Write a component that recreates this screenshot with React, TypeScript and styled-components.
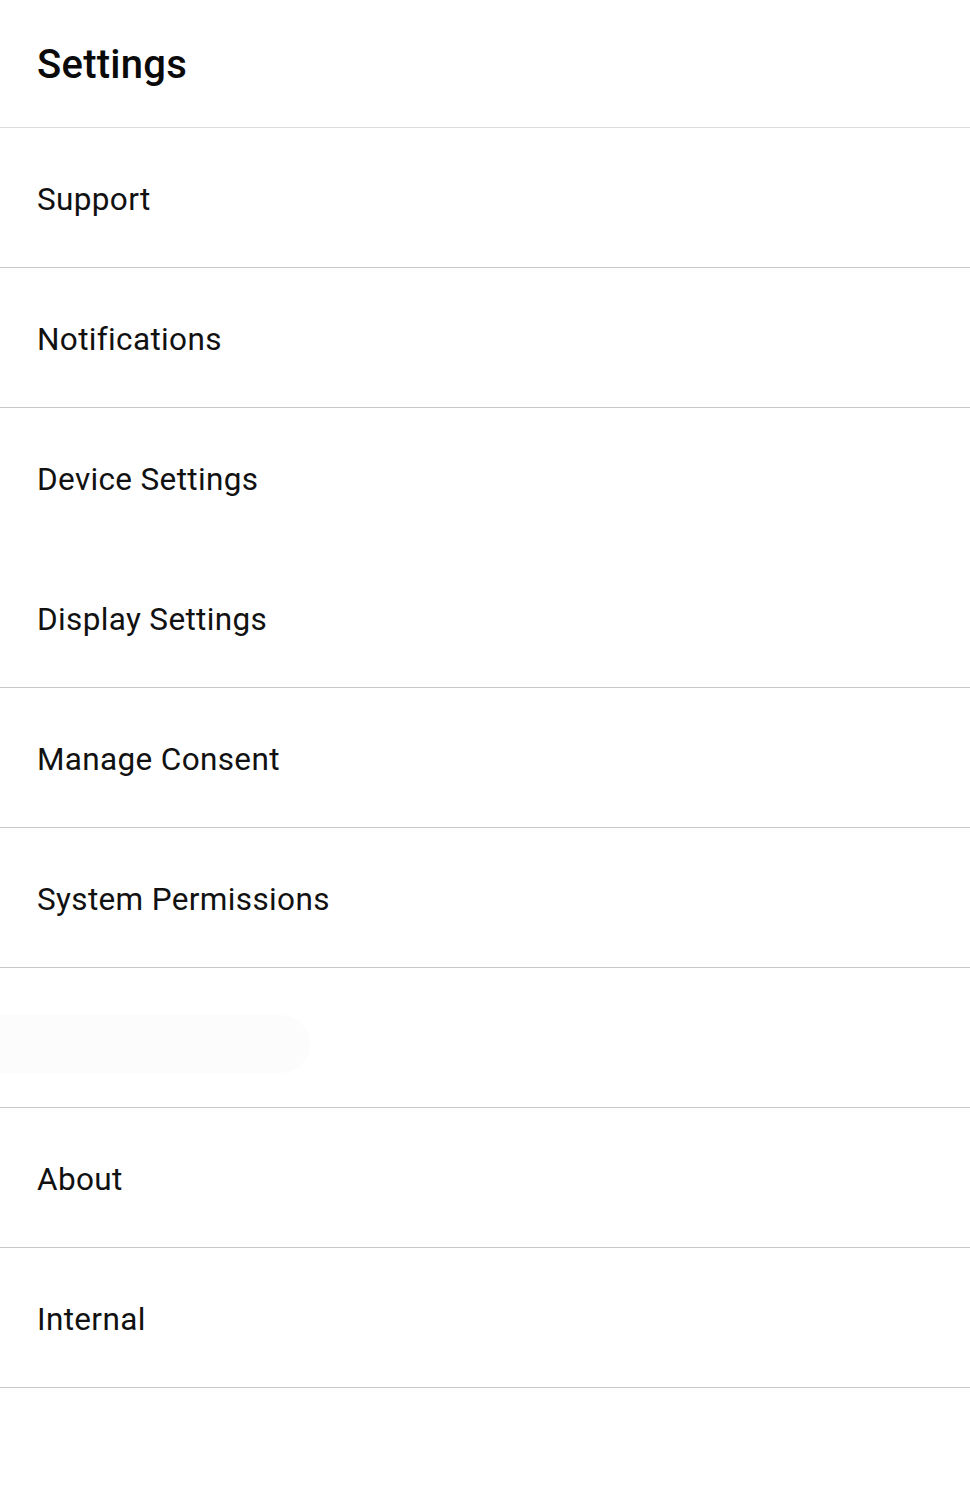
import styled, { createGlobalStyle } from 'styled-components'

const GlobalStyle = createGlobalStyle`
  html, body {
    margin: 0;
    padding: 0;
    background: #ffffff;
  }
  body {
    font-family: Roboto, "Noto Sans", "Liberation Sans", sans-serif;
    color: #000000;
  }
`

const Page = styled.div`
  width: 970px;
  min-height: 1487px;
  background: #ffffff;
`

const Header = styled.header`
  height: 128px;
  box-sizing: border-box;
  display: flex;
  align-items: center;
  padding: 2px 37px 0;
  border-bottom: 1px solid #dcdcdc;
`

const Title = styled.h1`
  margin: 0;
  font-size: 40px;
  font-weight: 500;
  letter-spacing: 0.25px;
  color: #0a0a0a;
`

const List = styled.ul`
  list-style: none;
  margin: 0;
  padding: 0;
`

const Row = styled.li<{ $divider?: boolean }>`
  height: 140px;
  box-sizing: border-box;
  display: flex;
  align-items: center;
  padding: 4px 37px 0;
  border-bottom: 1px solid ${p => (p.$divider ? '#c8c8c8' : 'transparent')};
  font-size: 31.5px;
  font-weight: 400;
  letter-spacing: 0.35px;
  color: #111111;
`

const GhostRow = styled.li`
  height: 140px;
  box-sizing: border-box;
  display: flex;
  align-items: center;
  border-bottom: 1px solid #c8c8c8;
`

const Ghost = styled.div`
  width: 310px;
  height: 58px;
  margin-top: 12px;
  border-radius: 4px 40px 40px 4px;
  background: #fcfcfc;
`

const items = [
  { label: 'Support', divider: true },
  { label: 'Notifications', divider: true },
  { label: 'Device Settings', divider: false },
  { label: 'Display Settings', divider: true },
  { label: 'Manage Consent', divider: true },
  { label: 'System Permissions', divider: true },
]

const tail = ['About', 'Internal']

export default function App() {
  return (
    <Page>
      <GlobalStyle />
      <Header>
        <Title>Settings</Title>
      </Header>
      <List>
        {items.map(item => (
          <Row key={item.label} $divider={item.divider}>
            {item.label}
          </Row>
        ))}
        <GhostRow>
          <Ghost />
        </GhostRow>
        {tail.map(label => (
          <Row key={label} $divider>
            {label}
          </Row>
        ))}
      </List>
    </Page>
  )
}
